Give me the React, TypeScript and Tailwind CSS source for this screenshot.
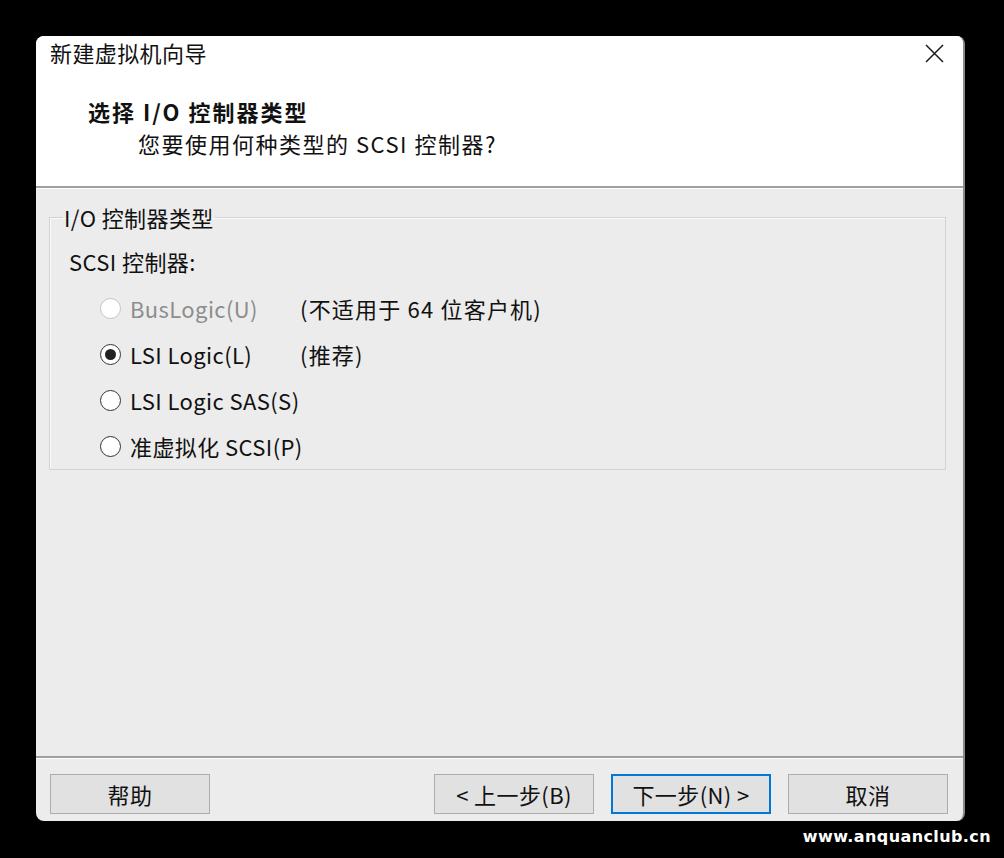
import React from "react";

const font = { fontFamily: '"Noto Sans CJK SC", "Noto Sans", sans-serif' };

const options = [
  { label: "BusLogic(U)", note: "(不适用于 64 位客户机)", disabled: true, checked: false },
  { label: "LSI Logic(L)", note: "(推荐)", disabled: false, checked: true },
  { label: "LSI Logic SAS(S)", note: "", disabled: false, checked: false },
  { label: "准虚拟化 SCSI(P)", note: "", disabled: false, checked: false },
];

function Radio({ checked, disabled }: { checked: boolean; disabled: boolean }) {
  return (
    <span
      className={
        "flex h-[21px] w-[21px] shrink-0 items-center justify-center rounded-full border-[1.5px] bg-white " +
        (disabled ? "border-[#c4c4c4]" : "border-[#333333]")
      }
    >
      {checked && <span className="h-[11px] w-[11px] rounded-full bg-[#222222]" />}
    </span>
  );
}

function Button({ label, primary }: { label: string; primary?: boolean }) {
  return (
    <button
      className={
        "flex h-[40px] w-[160px] items-center justify-center whitespace-nowrap bg-[#e1e1e1] text-[#111] " +
        (primary ? "border-2 border-[#0078d7]" : "border border-[#adadad]")
      }
    >
      {label}
    </button>
  );
}

export default function App() {
  return (
    <div className="relative h-[858px] w-[1004px] bg-black pl-[36px] pt-[36px]" style={font}>
      <div className="flex h-[785px] w-[929px] flex-col overflow-hidden rounded-[8px] border-r-2 border-[#8a8a8a] bg-[#ececec] text-[22px] tracking-[0.4px] text-[#111]">
        <div className="h-[152px] shrink-0 border-b-2 border-[#a0a0a0] bg-white">
          <div className="flex h-[32px] items-center justify-between pl-[14px] pr-[18px]">
            <span className="leading-[32px]">新建虚拟机向导</span>
            <svg width="21" height="21" viewBox="0 0 21 21" className="mt-[2px]">
              <path d="M2 2 L19 19 M19 2 L2 19" stroke="#1a1a1a" strokeWidth="1.5" fill="none" />
            </svg>
          </div>
          <div className="mt-[27px] whitespace-nowrap pl-[52px] font-bold leading-[32px] tracking-[2px]">
            选择 I/O 控制器类型
          </div>
          <div className="whitespace-nowrap pl-[102px] leading-[32px] tracking-[1.5px]">
            您要使用何种类型的 SCSI 控制器?
          </div>
        </div>

        <div className="flex-1 shadow-[inset_0_1px_0_#ffffff]">
          <fieldset className="ml-[13px] mr-[17px] mt-[17px] border border-[#d2d2d2] shadow-[inset_1px_1px_0_#fafafa]">
            <legend className="ml-[13px] whitespace-nowrap px-[1px] leading-[24px]">I/O 控制器类型</legend>
            <div className="whitespace-nowrap pl-[19px] pt-[16px] leading-[32px]">SCSI 控制器:</div>
            <div className="mt-[8px] flex flex-col">
              {options.map((o) => (
                <div key={o.label} className="flex h-[46px] items-center whitespace-nowrap pl-[50px]">
                  <Radio checked={o.checked} disabled={o.disabled} />
                  <span className={"ml-[9px] w-[170px] " + (o.disabled ? "text-[#8d8d8d]" : "")}>
                    {o.label}
                  </span>
                  <span className="tracking-[1.2px]">{o.note}</span>
                </div>
              ))}
            </div>
          </fieldset>
        </div>

        <div className="flex h-[65px] shrink-0 items-start border-t-2 border-[#a0a0a0] pl-[14px] pr-[15px] pt-[16px] shadow-[inset_0_1px_0_#ffffff]">
          <Button label="帮助" />
          <div className="ml-auto flex gap-[17px]">
            <Button label="< 上一步(B)" />
            <Button label="下一步(N) >" primary />
            <Button label="取消" />
          </div>
        </div>
      </div>

      <div
        className="absolute bottom-[9px] right-[13px] text-[16px] font-bold tracking-[0.4px] text-white"
        style={{ fontFamily: '"DejaVu Sans", sans-serif' }}
      >
        www.anquanclub.cn
      </div>
    </div>
  );
}
